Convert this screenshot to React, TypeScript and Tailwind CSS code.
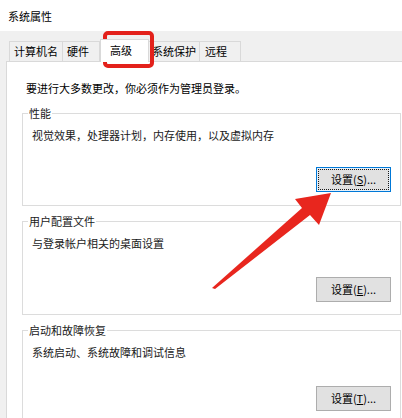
import React from 'react';

const FONT = "font-['Segoe_UI','Noto_Sans_CJK_SC',sans-serif]";

// 탭 정의: 너비와 왼쪽 여백은 스크린샷 기준
const TABS = [
  { label: '计算机名', w: 'w-[54px]', pl: 'pl-[4px]', active: false },
  { label: '硬件', w: 'w-[38px]', pl: 'pl-[4px]', active: false },
  { label: '高级', w: 'w-[49px]', pl: 'pl-[9px]', active: true },
  { label: '系统保护', w: 'w-[52px]', pl: 'pl-[3px]', active: false },
  { label: '远程', w: 'w-[42px]', pl: 'pl-[5px]', active: false },
];

interface GroupProps {
  title: string;
  desc: string;
  button: React.ReactNode;
  focused?: boolean;
  className?: string;
}

const SettingButton: React.FC<{ children: React.ReactNode; focused?: boolean }> = ({ children, focused }) => (
  <button
    type="button"
    className={
      focused
        ? 'w-[75px] h-[25px] bg-[#e5f1fb] border border-[#0078d7] p-[1px]'
        : 'w-[75px] h-[25px] bg-[#e1e1e1] border border-[#adadad]'
    }
  >
    {focused ? (
      <span className="flex w-full h-full items-center justify-center border border-dotted border-[#1a1a1a] bg-[#e1e1e1]">
        {children}
      </span>
    ) : (
      <span className="flex w-full h-full items-center justify-center">{children}</span>
    )}
  </button>
);

const Group: React.FC<GroupProps> = ({ title, desc, button, focused, className }) => (
  <div className={`relative border border-[#dcdcdc] ${className ?? ''}`}>
    {/* 그룹 제목 (테두리 위에 겹침) */}
    <span className="absolute -top-[8px] left-[5px] bg-white px-[1px] leading-[14px] text-[#1a1a1a]">{title}</span>
    <div className="pl-[9px] pt-[14px] leading-[14px] text-[#1a1a1a]">{desc}</div>
    <div className="flex justify-end pr-[9px] mt-auto">
      <SettingButton focused={focused}>{button}</SettingButton>
    </div>
  </div>
);

export default function App() {
  return (
    <div className={`relative w-[402px] h-[418px] overflow-hidden bg-[#f0f0f0] text-[11px] text-black ${FONT}`}>
      {/* 타이틀 바 */}
      <div className="h-[31px] bg-white flex items-center pl-[8px] pt-[1px]">系统属性</div>

      <div className="pl-[6px] pt-[7px]">
        {/* 탭 줄 */}
        <div className="flex items-end h-[23px] pl-[3px]">
          {TABS.map((t) =>
            t.active ? (
              <div
                key={t.label}
                className={`${t.w} ${t.pl} h-[23px] -mb-px z-10 bg-white border border-b-0 border-[#d9d9d9] flex items-center pb-[2px]`}
              >
                {t.label}
              </div>
            ) : (
              <div
                key={t.label}
                className={`${t.w} ${t.pl} h-[20px] -ml-px first:ml-0 bg-[#f0f0f0] border border-b-0 border-[#d9d9d9] flex items-center`}
              >
                {t.label}
              </div>
            )
          )}
        </div>

        {/* 탭 내용 패널 */}
        <div className="w-[420px] h-[380px] bg-white border border-[#d9d9d9] pl-[15px] pr-[16px]">
          <div className="pl-[4px] pt-[19px] leading-[14px]">要进行大多数更改，你必须作为管理员登录。</div>

          <div className="mt-[18px] flex flex-col gap-[15px] w-[379px]">
            <Group
              className="h-[93px] flex flex-col pb-[13px]"
              title="性能"
              desc="视觉效果，处理器计划，内存使用，以及虚拟内存"
              focused
              button={<span>设置(<span className="underline">S</span>)...</span>}
            />
            <Group
              className="h-[94px] flex flex-col pb-[12px]"
              title="用户配置文件"
              desc="与登录帐户相关的桌面设置"
              button={<span>设置(<span className="underline">E</span>)...</span>}
            />
            <Group
              className="h-[94px] flex flex-col pb-[12px]"
              title="启动和故障恢复"
              desc="系统启动、系统故障和调试信息"
              button={<span>设置(<span className="underline">T</span>)...</span>}
            />
          </div>
        </div>
      </div>

      {/* 강조 표시: 빨간 박스 */}
      <div className="absolute left-[103px] top-[31px] w-[51px] h-[37px] border-4 border-[#e3211b] rounded-[5px]" />

      {/* 강조 표시: 빨간 화살표 */}
      <svg className="absolute left-0 top-0 pointer-events-none" width="402" height="418" viewBox="0 0 402 418">
        <polygon
          points="212,288 302,208 295,199 331,193 319,225 310,215 215,289"
          fill="#e8261e"
        />
      </svg>
    </div>
  );
}
